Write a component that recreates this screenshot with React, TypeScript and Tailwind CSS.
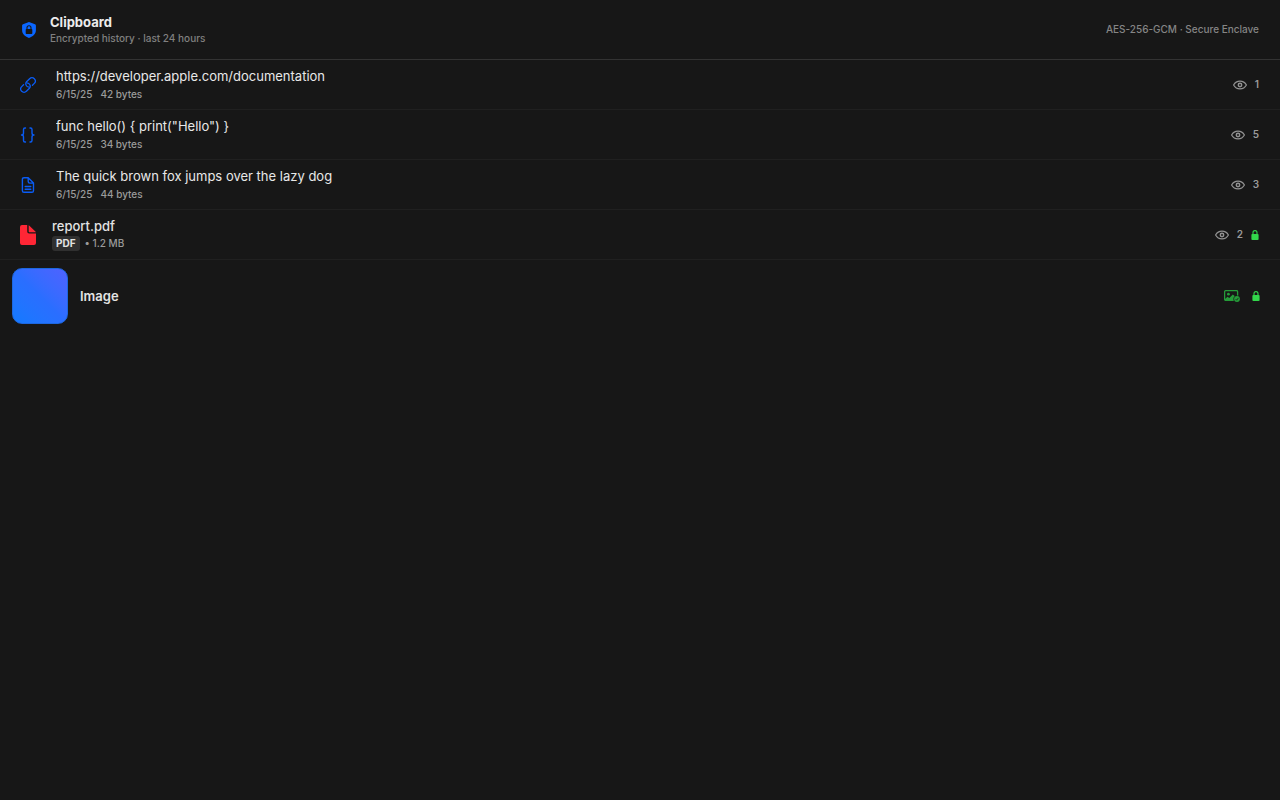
import type { ReactNode } from "react";

function ShieldIcon() {
  return (
    <svg className="h-4 w-4 shrink-0" viewBox="0 0 16 16" aria-hidden="true">
      <path d="M8 0 14 2.3c.6.2.9.6.9 1.200v4.800c0 3.600-2.500 5.900-6.900 7.700-4.400-1.800-6.900-4.100-6.900-7.700V3.500c0-.6.3-1 .9-1.200Z" fill="#0a66ff" />
      <rect x="4.700" y="7" width="6.600" height="5" rx=".8" fill="#171717" />
      <path d="M6 7.500V5.700a2 2 0 0 1 4 0v1.800" fill="none" stroke="#171717" strokeWidth="1.100" />
    </svg>
  );
}

function LinkIcon() {
  return (
    <svg className="h-4 w-4" viewBox="-8 -8 16 16" fill="none" stroke="#0a5cf5" strokeWidth="1.300" strokeLinecap="round" aria-hidden="true">
      <g transform="rotate(-45)">
        <path d="M-3 -3.300H-5.600A3.300 3.300 0 0 0 -5.600 3.300H-1.600A3.300 3.300 0 0 0 .8 -2.300" />
        <path d="M3 3.300H5.600A3.300 3.300 0 0 0 5.600 -3.300H1.600A3.300 3.300 0 0 0 -.8 2.300" />
      </g>
    </svg>
  );
}

function BracesIcon() {
  return (
    <svg className="h-4 w-4" viewBox="0 0 16 16" fill="none" stroke="#0a5cf5" strokeWidth="1.400" strokeLinecap="round" strokeLinejoin="round" aria-hidden="true">
      <path d="M5.500 1H5Q3.500 1 3.500 2.500V6Q3.500 8 1.500 8Q3.500 8 3.500 10V13.500Q3.500 15 5 15H5.500M10 1H10.500Q12 1 12 2.500V6Q12 8 14 8Q12 8 12 10V13.500Q12 15 10.500 15H10" />
    </svg>
  );
}

function DocumentIcon() {
  return (
    <svg className="h-4 w-4" viewBox="0 0 16 16" fill="none" stroke="#0a5cf5" strokeWidth="1.400" strokeLinecap="round" strokeLinejoin="round" aria-hidden="true">
      <path d="M4 .7h4.200l5.300 5.400v7.600q0 1.600-1.600 1.600H4q-1.600 0-1.600-1.600V2.300Q2.400.7 4 .7ZM8.200.9v3.700q0 1.500 1.500 1.500h3.600M5.200 9.500h5.600M5.200 12.200h5.600" />
    </svg>
  );
}

function FileIcon() {
  return (
    <svg className="h-5 w-4" viewBox="0 0 16 20" fill="#ff2635" aria-hidden="true">
      <path d="M2 0h5.200v6.600q0 1.900 1.900 1.900H16V18q0 2-2 2H2q-2 0-2-2V2Q0 0 2 0Z" />
      <path d="M8.700.3q.4.1.7.4l6 5.800q.3.300.4.700H9.300q-.6 0-.6-.6Z" />
    </svg>
  );
}

function EyeIcon() {
  return (
    <svg className="h-3 w-3.5" viewBox="0 0 14 12" fill="none" stroke="#929292" aria-hidden="true">
      <path d="M.6 6C2 3.400 4.300 2.100 7 2.100S12 3.400 13.400 6C12 8.600 9.700 9.900 7 9.900S2 8.600.6 6Z" strokeWidth="1.200" />
      <circle cx="7" cy="6" r="1.700" strokeWidth="1.500" />
    </svg>
  );
}

function LockIcon() {
  return (
    <svg className="h-3 w-2" viewBox="0 0 8 12" aria-label="Encrypted" role="img">
      <rect x=".4" y="5" width="7.200" height="6" rx="1" fill="#32d74b" />
      <path d="M2 5.500V3.600a2 2 0 0 1 4 0v1.900" fill="none" stroke="#32d74b" strokeWidth="1.100" />
    </svg>
  );
}

function ImageCheckIcon() {
  return (
    <svg className="h-3 w-4" viewBox="0 0 16 12" aria-label="Image verified" role="img">
      <rect x=".6" y=".6" width="13" height="9.800" rx="1.200" fill="none" stroke="#259b39" strokeWidth="1.300" />
      <circle cx="4.400" cy="4.200" r="1.400" fill="#259b39" />
      <path d="m1 9 2.500-2.200 1.800 1.200 3.500-3.500L13.200 8v2.400H1Z" fill="#259b39" />
      <circle cx="13" cy="9" r="3.600" fill="#171717" />
      <circle cx="13" cy="9" r="2.900" fill="#259b39" />
      <path d="m11.700 9.200 1 1 1.700-2.300" fill="none" stroke="#171717" strokeWidth=".8" />
    </svg>
  );
}

function Views({ count }: { count: number }) {
  return (
    <span className="flex items-center gap-2 text-[10px] leading-[15px] font-semibold text-[#9b9b9b]">
      <EyeIcon />
      <span>{count}</span>
    </span>
  );
}

function TextRow({ icon, title, size, views }: { icon: ReactNode; title: string; size: string; views: number }) {
  return (
    <li className="flex items-center border-b border-[#202020] py-[7px] pr-[21px] pl-3">
      <span className="mr-3 flex w-8 justify-center">{icon}</span>
      <div className="min-w-0 flex-1">
        <p className="truncate text-[13px] leading-[18px] text-[#e8e8e8]">{title}</p>
        <p className="mt-0.5 flex gap-2 text-[10px] leading-[15px] font-medium text-[#9b9b9b]">
          <span>6/15/25</span>
          <span>{size}</span>
        </p>
      </div>
      <Views count={views} />
    </li>
  );
}

export default function App() {
  return (
    <main className="min-h-screen bg-[#171717] font-['Inter',sans-serif]">
      <header className="flex items-center border-b border-[#333333] py-3 pr-[21px] pl-[21px]">
        <ShieldIcon />
        <div className="ml-[13px] flex-1 py-px">
          <h1 className="text-[13px] leading-[18px] font-bold text-[#ececec]">Clipboard</h1>
          <p className="text-[10px] leading-[15px] font-medium text-[#808080]">Encrypted history · last 24 hours</p>
        </div>
        <p className="text-[10px] leading-[15px] font-medium text-[#858585]">AES-256-GCM · Secure Enclave</p>
      </header>
      <ul>
        <TextRow icon={<LinkIcon />} title="https://developer.apple.com/documentation" size="42 bytes" views={1} />
        <TextRow icon={<BracesIcon />} title={'func hello() { print("Hello") }'} size="34 bytes" views={5} />
        <TextRow icon={<DocumentIcon />} title="The quick brown fox jumps over the lazy dog" size="44 bytes" views={3} />
        <li className="flex items-center border-b border-[#202020] py-[7px] pr-[21px] pl-3">
          <span className="mr-2 flex w-8 justify-center"><FileIcon /></span>
          <div className="flex-1">
            <p className="text-[13px] leading-[18px] font-medium text-[#e3e3e3]">report.pdf</p>
            <p className="mt-px mb-px flex items-center gap-[5px] text-[10px] leading-[15px] font-medium text-[#9b9b9b]">
              <span className="rounded-[3px] bg-[#303030] px-1 font-bold text-[#e3e3e3]">PDF</span>
              <span>• 1.2 MB</span>
            </p>
          </div>
          <span className="flex items-center gap-2"><Views count={2} /><LockIcon /></span>
        </li>
        <li className="flex items-center py-2 pr-5 pl-3">
          <span className="h-14 w-14 rounded-[10px] border border-[#1d67df] bg-linear-to-tr from-[#127aff] via-[#2a6eff] to-[#4e62ff]" />
          <p className="ml-3 flex-1 text-[13px] leading-4 font-semibold text-[#e3e3e3]">Image</p>
          <span className="flex items-center gap-3"><ImageCheckIcon /><LockIcon /></span>
        </li>
      </ul>
    </main>
  );
}
